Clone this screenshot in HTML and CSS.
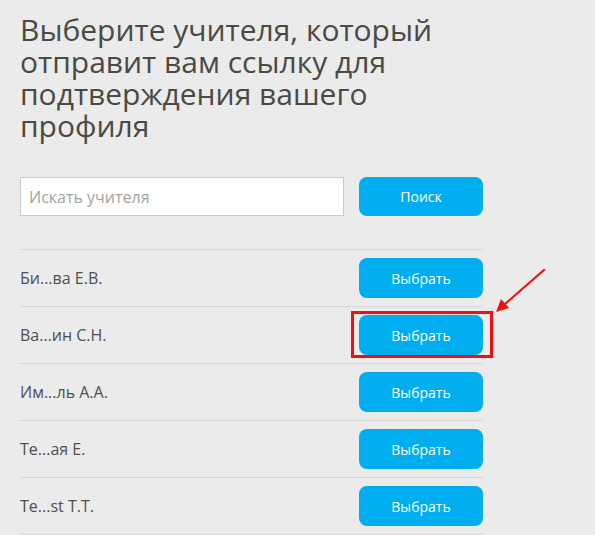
FILE: index.html
```html
<!DOCTYPE html>
<html lang="ru">
<head>
<meta charset="utf-8">
<title>Выбор учителя</title>
<link rel="stylesheet" href="styles.css">
</head>
<body>
<main class="page">
  <h1 class="title">Выберите учителя, который отправит вам ссылку для подтверждения вашего профиля</h1>
  <form class="search" onsubmit="return false">
    <input class="search-input" type="text" placeholder="Искать учителя">
    <button class="btn btn-search" type="submit">Поиск</button>
  </form>
  <ul class="teachers">
    <li class="teacher"><span class="name">Би...ва Е.В.</span><button class="btn">Выбрать</button></li>
    <li class="teacher"><span class="name">Ва...ин С.Н.</span><span class="btn-wrap"><button class="btn">Выбрать</button><span class="highlight"></span></span></li>
    <li class="teacher"><span class="name">Им...ль А.А.</span><button class="btn">Выбрать</button></li>
    <li class="teacher"><span class="name">Те...ая Е.</span><button class="btn">Выбрать</button></li>
    <li class="teacher"><span class="name">Те...st Т.Т.</span><button class="btn">Выбрать</button></li>
  </ul>
  <svg class="arrow" width="60" height="55" viewBox="0 0 60 55">
    <line x1="53" y1="4" x2="14" y2="38" stroke="#ee1111" stroke-width="2.2" stroke-linecap="round"/>
    <polygon points="5,46 10,33 18,42" fill="#ee1111"/>
  </svg>
</main>
</body>
</html>
```

FILE: styles.css
```css
html, body {
  margin: 0;
  padding: 0;
  background: #ebebeb;
}

body {
  font-family: "Open Sans", "Liberation Sans", sans-serif;
  color: #4d4d4d;
}

.page {
  position: relative;
  width: 595px;
  height: 535px;
  padding: 0 0 0 20px;
  box-sizing: border-box;
  overflow: hidden;
}

.title {
  margin: 14px 0 0;
  width: 430px;
  font-size: 30px;
  line-height: 32px;
  font-weight: 400;
  color: #4a4a45;
}

.search {
  display: flex;
  gap: 15px;
  margin-top: 35px;
  width: 463px;
}

.search-input {
  width: 324px;
  height: 39px;
  box-sizing: border-box;
  border: 1px solid #cccccc;
  background: #ffffff;
  padding: 0 8px;
  font-family: "Open Sans", "Liberation Sans", sans-serif;
  font-size: 16px;
  color: #555;
  outline: none;
}

.search-input::placeholder {
  color: #a3a3a3;
}

.btn {
  width: 124px;
  height: 40px;
  border: none;
  border-radius: 8px;
  background: #00aeef;
  color: #ffffff;
  font-family: "Open Sans", "Liberation Sans", sans-serif;
  font-size: 14px;
  cursor: pointer;
  padding: 0;
}

.btn-search {
  height: 39px;
}

.teachers {
  list-style: none;
  margin: 33px 0 0;
  padding: 0;
  width: 463px;
}

.teacher {
  display: flex;
  align-items: center;
  justify-content: space-between;
  border-top: 1px solid #d9d9d9;
  padding: 8px 0;
}

.teacher:last-child {
  border-bottom: 1px solid #d9d9d9;
}

.name {
  font-size: 16px;
  color: #505050;
}

.btn-wrap {
  position: relative;
  display: flex;
}

.highlight {
  position: absolute;
  left: -8px;
  top: -4px;
  width: 142px;
  height: 47px;
  box-sizing: border-box;
  border: 3px solid #ee1111;
  pointer-events: none;
}

.arrow {
  position: absolute;
  left: 491px;
  top: 266px;
}
```
